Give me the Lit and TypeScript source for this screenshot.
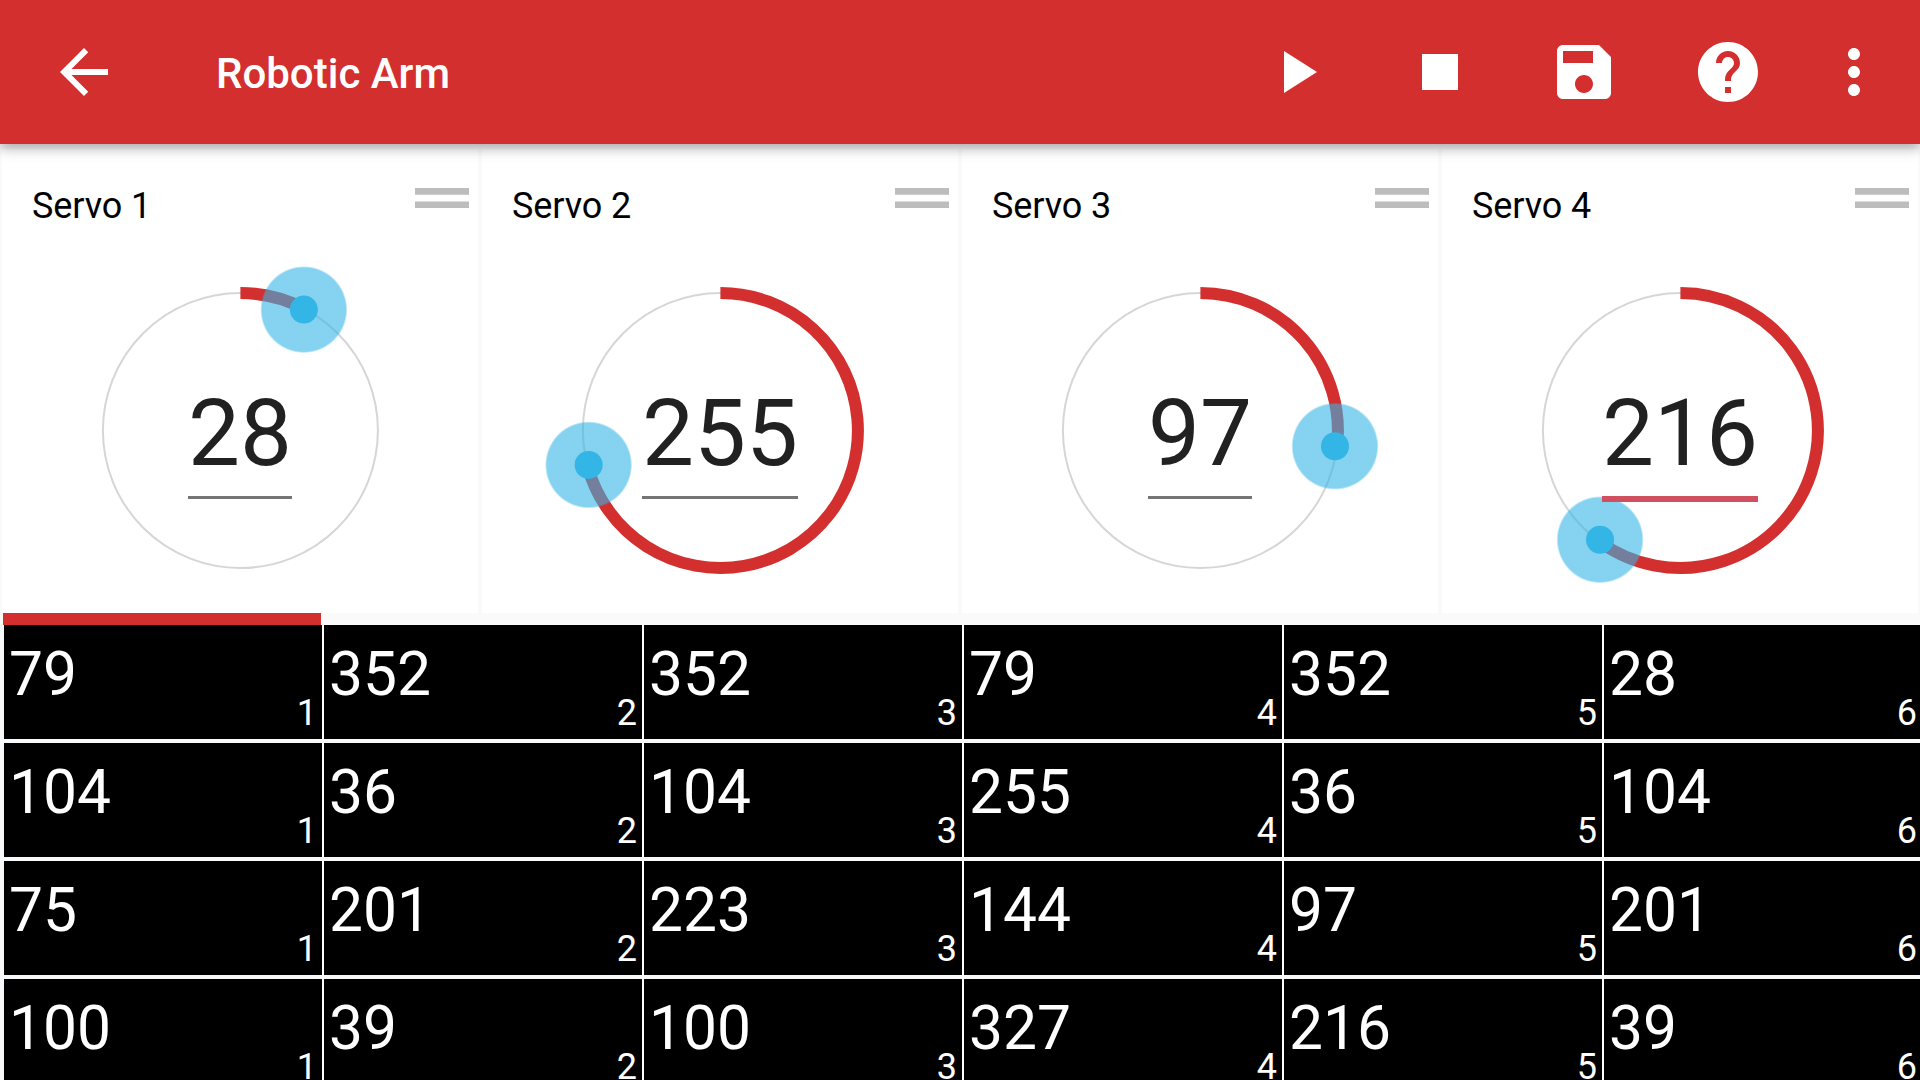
import { LitElement, html, css, svg } from "lit";
import { customElement, property } from "lit/decorators.js";

const ICONS: Record<string, string> = {
  back: "M20 11H7.83l5.59-5.59L12 4l-8 8 8 8 1.41-1.41L7.83 13H20v-2z",
  play: "M8 5v14l11-7z",
  stop: "M6 6h12v12H6z",
  save: "M17 3H5c-1.11 0-2 .9-2 2v14c0 1.1.89 2 2 2h14c1.1 0 2-.9 2-2V7l-4-4zm-5 16c-1.66 0-3-1.34-3-3s1.34-3 3-3 3 1.34 3 3-1.34 3-3 3zm3-10H5V5h10v4z",
  help: "M12 2C6.48 2 2 6.48 2 12s4.48 10 10 10 10-4.48 10-10S17.52 2 12 2zm1 17h-2v-2h2v2zm2.07-7.75l-.9.92C13.45 12.9 13 13.5 13 15h-2v-.5c0-1.1.45-2.1 1.17-2.83l1.24-1.26c.37-.36.59-.86.59-1.41 0-1.1-.9-2-2-2s-2 .9-2 2H8c0-2.21 1.79-4 4-4s4 1.79 4 4c0 .88-.36 1.68-.93 2.25z",
  more: "M12 8c1.1 0 2-.9 2-2s-.9-2-2-2-2 .9-2 2 .9 2 2 2zm0 2c-1.1 0-2 .9-2 2s.9 2 2 2 2-.9 2-2-.9-2-2-2zm0 6c-1.1 0-2 .9-2 2s.9 2 2 2 2-.9 2-2-.9-2-2-2z",
};

const icon = (name: string) =>
  html`<svg class="icon" viewBox="0 0 24 24"><path d=${ICONS[name]}></path></svg>`;

@customElement("app-toolbar")
export class AppToolbar extends LitElement {
  static styles = css`
    :host {
      display: flex;
      align-items: center;
      box-sizing: border-box;
      height: 144px;
      padding: 0 30px 0 48px;
      background: #d32f2f;
      color: #fff;
      box-shadow: 0 4px 12px rgba(0, 0, 0, 0.34);
      position: relative;
      z-index: 1;
    }
    .icon {
      display: block;
      width: 72px;
      height: 72px;
      fill: currentColor;
    }
    .title {
      flex: 1;
      margin: 3px 0 0 96px;
      font-size: 42px;
      font-weight: 500;
      line-height: 50px;
    }
    .actions {
      display: flex;
      gap: 72px;
      margin-right: 54px;
    }
  `;
  render() {
    return html`
      ${icon("back")}
      <div class="title">Robotic Arm</div>
      <div class="actions">${["play", "stop", "save", "help"].map(icon)}</div>
      ${icon("more")}
    `;
  }
}

@customElement("servo-card")
export class ServoCard extends LitElement {
  @property() label = "";
  @property({ type: Number }) value = 0;
  @property({ type: Boolean, reflect: true }) active = false;

  static styles = css`
    :host {
      display: flex;
      flex-direction: column;
      position: relative;
      background: #fff;
    }
    .head {
      display: flex;
      justify-content: space-between;
      align-items: flex-start;
      padding: 35px 9px 0 30px;
      height: 50px;
    }
    .label {
      margin-top: 1px;
      font-size: 36px;
      letter-spacing: -0.1px;
      line-height: 42px;
      color: #000;
    }
    .grip {
      width: 54px;
      height: 20.25px;
      margin-top: 4px;
      fill: #bdbdbd;
    }
    .dial {
      flex: 1;
      display: grid;
      place-items: start center;
    }
    .ring,
    .field {
      grid-area: 1 / 1;
    }
    .ring {
      width: 476px;
      height: 379px;
      overflow: visible;
    }
    .field {
      margin-top: 140px;
      padding-top: 5px;
      height: 125px;
      box-sizing: border-box;
      font-size: 92.5px;
      line-height: 109px;
      color: #212121;
      border-bottom: 3px solid #757575;
      position: relative;
    }
    :host([active]) .field {
      height: 128px;
      border-bottom: 6px solid #d05060;
    }
  `;

  private point(cx: number, cy: number, r: number) {
    const a = (this.value * Math.PI) / 180;
    return [cx + r * Math.sin(a), cy - r * Math.cos(a)];
  }

  render() {
    const [ax, ay] = this.point(238.4, 196.5, 137.5);
    const [kx, ky] = this.point(238, 195.7, 136);
    const large = this.value > 180 ? 1 : 0;
    return html`
      <div class="head">
        <span class="label">${this.label}</span>
        <svg class="grip" viewBox="4 9 16 6"><path d="M20 9H4v2h16V9zM4 15h16v-2H4v2z"></path></svg>
      </div>
      <div class="dial">
        <svg class="ring" viewBox="0 0 476 379">
          <defs>
            <radialGradient id="halo">
              <stop offset="0.955" stop-color="#33b5e5" stop-opacity="0.6"></stop>
              <stop offset="1" stop-color="#33b5e5" stop-opacity="0"></stop>
            </radialGradient>
          </defs>
          <circle cx="238.4" cy="196.5" r="137.5" fill="none" stroke="#d6d6d6" stroke-width="2"></circle>
          ${svg`<path d="M238.4 59A137.5 137.5 0 ${large} 1 ${ax} ${ay}" fill="none" stroke="#d32f2f" stroke-width="12"></path>
          <circle cx=${kx} cy=${ky} r="43.7" fill="url(#halo)"></circle>
          <circle cx=${kx} cy=${ky} r="14" fill="#33b5e5"></circle>`}
        </svg>
        <div class="field">${this.value}</div>
      </div>
    `;
  }
}

@customElement("step-grid")
export class StepGrid extends LitElement {
  static rows = [
    [79, 352, 352, 79, 352, 28],
    [104, 36, 104, 255, 36, 104],
    [75, 201, 223, 144, 97, 201],
    [100, 39, 100, 327, 216, 39],
  ];
  static styles = css`
    :host {
      display: block;
      background: #fafafa;
      overflow: hidden;
    }
    .marker {
      width: 318px;
      height: 12px;
      margin-left: 3px;
      background: #d32f2f;
    }
    .rows {
      display: grid;
      row-gap: 4px;
      padding-left: 4px;
      background: #f7f9fa;
    }
    .row {
      display: grid;
      grid-template-columns: repeat(6, 318px);
      column-gap: 2px;
      width: 1918px;
      background: #fff;
    }
    .cell {
      display: flex;
      justify-content: space-between;
      box-sizing: border-box;
      height: 114px;
      padding: 0 5px;
      background: #000;
      color: #fff;
    }
    .value {
      font-size: 60.5px;
      line-height: 71px;
      margin-top: 14px;
    }
    .step {
      font-size: 36px;
      line-height: 42px;
      margin-top: 67px;
    }
  `;
  render() {
    return html`
      <div class="marker"></div>
      <div class="rows">
        ${StepGrid.rows.map(
          (row) => html`<div class="row">
            ${row.map(
              (v, i) => html`<div class="cell"><span class="value">${v}</span><span class="step">${i + 1}</span></div>`
            )}
          </div>`
        )}
      </div>
    `;
  }
}

@customElement("app-root")
export class AppRoot extends LitElement {
  static styles = css`
    :host {
      display: flex;
      flex-direction: column;
      width: 1920px;
      height: 1080px;
      overflow: hidden;
      background: #fafafa;
      font-family: Roboto, "Liberation Sans", sans-serif;
    }
    .servos {
      display: grid;
      grid-template-columns: repeat(4, 476px);
      column-gap: 4px;
      padding: 5px 2px 0;
      height: 464px;
    }
    .steps {
      flex: 1;
    }
  `;
  render() {
    return html`
      <app-toolbar></app-toolbar>
      <div class="servos">
        ${[28, 255, 97, 216].map(
          (v, i) => html`<servo-card label=${`Servo ${i + 1}`} .value=${v} ?active=${i === 3}></servo-card>`
        )}
      </div>
      <step-grid class="steps"></step-grid>
    `;
  }
}
